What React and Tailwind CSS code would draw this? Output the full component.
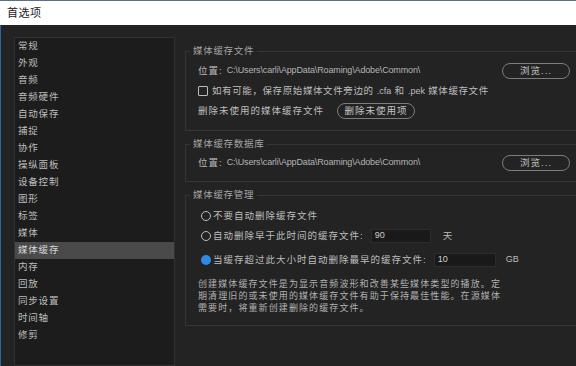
import React from 'react';

const navItems = [
  "常规", "外观", "音频", "音频硬件", "自动保存", "捕捉", "协作", "操纵面板",
  "设备控制", "图形", "标签", "媒体", "媒体缓存", "内存", "回放", "同步设置",
  "时间轴", "修剪"
];

const path = "C:\\Users\\carli\\AppData\\Roaming\\Adobe\\Common\\";

const PillButton = ({ children, className = '' }) => (
  <button className={`h-[16px] rounded-full border border-[#7c7c7c] text-[9.5px] leading-none tracking-[1px] text-[#c4c4c4] ${className}`}>
    {children}
  </button>
);

const Group = ({ title, className = '', children }) => (
  <fieldset className={`border border-[#353535] pl-[4px] pr-[11px] ${className}`}>
    <legend className="px-[3px] text-[9.5px] leading-[14px] tracking-[0.7px] text-[#a3a3a3]">{title}</legend>
    <div className="pl-[8px]">{children}</div>
  </fieldset>
);

const LocationRow = () => (
  <div className="flex h-[20px] items-center">
    <span className="mr-[4px] text-[9.5px] tracking-[1px] text-[#b8b8b8]">位置:</span>
    <span className="text-[9px] tracking-[-0.15px] text-[#b4b4b4]">{path}</span>
    <PillButton className="ml-auto w-[68px]">浏览...</PillButton>
  </div>
);

const Radio = ({ checked }) => (
  checked
    ? <span className="h-[10px] w-[10px] shrink-0 rounded-full bg-[#2f8ae6]" />
    : <span className="h-[10px] w-[10px] shrink-0 rounded-full border-[1.5px] border-[#bdbdbd]" />
);

const NumInput = ({ value, className = '' }) => (
  <div className={`flex h-[14px] items-center border border-[#2c2c2c] bg-[#191919] pl-[3px] text-[9px] tracking-normal text-[#cfcfcf] ${className}`}>
    {value}
  </div>
);

export default function App() {
  return (
    <div className="flex h-[366px] w-[576px] flex-col overflow-hidden font-['Liberation_Sans','Noto_Sans_CJK_SC',sans-serif]">
      <div className="flex h-[25px] shrink-0 items-center border-t border-[#5b6f86] bg-white pl-[7px] text-[11px] tracking-[0.5px] text-[#1a1a1a]">
        首选项
      </div>

      <div className="flex flex-1 border-l border-[#2a64aa] bg-[#232323] pl-[13px] pt-[12px]">
        {/* category list */}
        <div className="w-[161px] shrink-0 border border-[#323232] bg-[#1c1c1c]">
          {navItems.map(item => (
            <div
              key={item}
              className={`flex h-[17px] items-center pl-[3px] text-[9.5px] tracking-[0.8px] ${item === "媒体缓存" ? 'bg-[#4a4a4a] text-[#d6d6d6]' : 'text-[#bdbdbd]'}`}
            >
              {item}
            </div>
          ))}
        </div>

        {/* settings */}
        <div className="ml-[10px] mt-[7px] flex w-[397px] shrink-0 flex-col gap-[6px]">
          <Group title="媒体缓存文件" className="pb-[9px] pt-[3px]">
            <LocationRow />
            <div className="flex h-[20px] items-center gap-[4px] text-[9.5px] tracking-[0.6px] text-[#bdbdbd]">
              <span className="h-[10px] w-[10px] shrink-0 rounded-[1px] border border-[#bdbdbd]" />
              <span>如有可能，保存原始媒体文件旁边的 <span className="text-[9px] tracking-normal">.cfa</span> 和 <span className="text-[9px] tracking-normal">.pek</span> 媒体缓存文件</span>
            </div>
            <div className="flex h-[20px] items-center text-[9.5px] tracking-[1px] text-[#bdbdbd]">
              <span>删除未使用的媒体缓存文件</span>
              <PillButton className="ml-[13px] w-[78px]">删除未使用项</PillButton>
            </div>
          </Group>

          <Group title="媒体缓存数据库" className="pb-[8px] pt-[2px]">
            <LocationRow />
          </Group>

          <Group title="媒体缓存管理" className="pb-[11px] pt-[4px]">
            <div className="pl-[3px] text-[9.5px] tracking-[1px] text-[#bdbdbd]">
              <div className="flex h-[20px] items-center gap-[2px]">
                <Radio />
                <span>不要自动删除缓存文件</span>
              </div>
              <div className="flex h-[20px] items-center gap-[2px]">
                <Radio />
                <span>自动删除早于此时间的缓存文件:</span>
                <NumInput value="90" className="ml-[5px] w-[60px]" />
                <span className="ml-[10px]">天</span>
              </div>
              <div className="mt-[4px] flex h-[20px] items-center gap-[2px]">
                <Radio checked />
                <span>当缓存超过此大小时自动删除最早的缓存文件:</span>
                <NumInput value="10" className="ml-[5px] w-[62px]" />
                <span className="ml-[8px] text-[9px] tracking-normal">GB</span>
              </div>
            </div>
            <div className="mt-[8px] text-[9px] leading-[12px] tracking-[1.1px] text-[#b2b2b2]">
              <div>创建媒体缓存文件是为显示音频波形和改善某些媒体类型的播放。定</div>
              <div>期清理旧的或未使用的媒体缓存文件有助于保持最佳性能。在源媒体</div>
              <div>需要时，将重新创建删除的缓存文件。</div>
            </div>
          </Group>
        </div>
      </div>
    </div>
  );
}
